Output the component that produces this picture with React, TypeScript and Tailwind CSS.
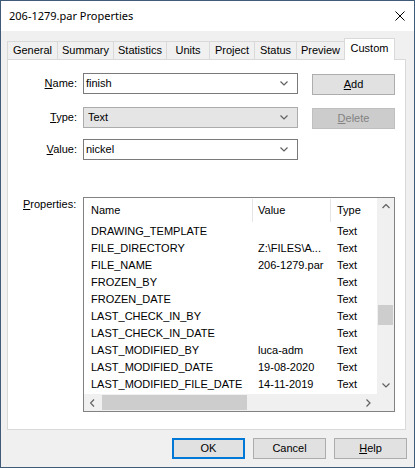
import React from "react";

const rows: [string, string, string][] = [
  ["DRAWING_TEMPLATE", "", "Text"],
  ["FILE_DIRECTORY", "Z:\\FILES\\A...", "Text"],
  ["FILE_NAME", "206-1279.par", "Text"],
  ["FROZEN_BY", "", "Text"],
  ["FROZEN_DATE", "", "Text"],
  ["LAST_CHECK_IN_BY", "", "Text"],
  ["LAST_CHECK_IN_DATE", "", "Text"],
  ["LAST_MODIFIED_BY", "luca-adm", "Text"],
  ["LAST_MODIFIED_DATE", "19-08-2020", "Text"],
  ["LAST_MODIFIED_FILE_DATE", "14-11-2019", "Text"],
];

const tabs: { label: string; w: string }[] = [
  { label: "General", w: "w-[50px]" },
  { label: "Summary", w: "w-[56px]" },
  { label: "Statistics", w: "w-[53px]" },
  { label: "Units", w: "w-[43px]" },
  { label: "Project", w: "w-[45px]" },
  { label: "Status", w: "w-[42px]" },
  { label: "Preview", w: "w-[48px]" },
];

function Chevron({ dir }: { dir: "down" | "up" | "left" | "right" }) {
  const pts =
    dir === "down"
      ? "0.5,0.5 4,4 7.5,0.5"
      : dir === "up"
      ? "0.5,4 4,0.5 7.5,4"
      : dir === "left"
      ? "4,0.5 0.5,4 4,7.5"
      : "0.5,0.5 4,4 0.5,7.5";
  const vb = dir === "down" || dir === "up" ? "0 0 8 5" : "0 0 5 8";
  const cls = dir === "down" || dir === "up" ? "w-[8px] h-[5px]" : "w-[5px] h-[8px]";
  return (
    <svg viewBox={vb} className={cls}>
      <polyline points={pts} fill="none" stroke="#606060" strokeWidth="1.2" />
    </svg>
  );
}

function Combo({ text, disabled }: { text: string; disabled?: boolean }) {
  return (
    <div
      className={
        disabled
          ? "ml-[6px] w-[215px] h-[21px] border border-[#acacac] bg-[#e5e5e5] flex items-center pl-[4px] pr-[9px]"
          : "ml-[6px] w-[215px] h-[21px] border border-[#7a7a7a] bg-white flex items-center pl-[2px] pr-[9px]"
      }
    >
      <span className="flex-1">{text}</span>
      <Chevron dir="down" />
    </div>
  );
}

export default function App() {
  return (
    <div className="w-[415px] h-[468px] border border-[#3f5b78] bg-[#f0f0f0] flex flex-col text-[11px] text-black font-['Liberation_Sans',Arial,sans-serif] leading-[13px] overflow-hidden">
      {/* Title bar */}
      <div className="h-[30px] bg-white flex items-center pl-[8px] pr-[9px] shrink-0">
        <span className="flex-1 text-[11px] leading-[14px] font-['Noto_Sans',sans-serif] -mt-[1px]">206-1279.par Properties</span>
        <svg viewBox="0 0 10 10" className="w-[10px] h-[10px]">
          <path d="M0.5 0.5 L9.5 9.5 M9.5 0.5 L0.5 9.5" stroke="#000" strokeWidth="1" fill="none" />
        </svg>
      </div>

      {/* Body */}
      <div className="flex flex-col pt-[7px] pl-[6px] pr-[8px]">
        {/* Tabs */}
        <div className="flex items-end h-[21px]">
          {tabs.map((t) => (
            <div
              key={t.label}
              className={`${t.w} h-[18px] border-l border-t border-[#d9d9d9] bg-[#f0f0f0] flex items-center justify-center`}
            >
              {t.label}
            </div>
          ))}
          <div className="w-[51px] h-[22px] -mb-[1px] border-l border-t border-r border-[#d9d9d9] bg-white flex items-start justify-center pt-[3px] relative z-10">
            Custom
          </div>
        </div>

        {/* Panel */}
        <div className="h-[371px] border border-[#d9d9d9] bg-white flex flex-col pt-[13px]">
          {/* Name */}
          <div className="flex items-start">
            <div className="w-[69px] h-[21px] flex items-center justify-end">
              <span>
                <span className="underline">N</span>ame:
              </span>
            </div>
            <Combo text="finish" />
            <div className="ml-[14px] mt-[1px] w-[83px] h-[21px] border border-[#adadad] bg-[#e1e1e1] flex items-center justify-center">
              <span>
                <span className="underline">A</span>dd
              </span>
            </div>
          </div>
          {/* Type */}
          <div className="flex items-start mt-[12px]">
            <div className="w-[69px] h-[21px] flex items-center justify-end">
              <span>
                <span className="underline">T</span>ype:
              </span>
            </div>
            <Combo text="Text" disabled />
            <div className="ml-[14px] mt-[1px] w-[83px] h-[21px] border border-[#bfbfbf] bg-[#cccccc] text-[#838383] flex items-center justify-center">
              <span>
                <span className="underline">D</span>elete
              </span>
            </div>
          </div>
          {/* Value */}
          <div className="flex items-start mt-[10px]">
            <div className="w-[69px] h-[21px] flex items-center justify-end">
              <span>
                <span className="underline">V</span>alue:
              </span>
            </div>
            <Combo text="nickel" />
          </div>

          {/* Properties */}
          <div className="flex items-start mt-[37px]">
            <div className="w-[75px] pl-[15px] mt-[1px]">
              <span className="underline">P</span>roperties:
            </div>
            <div className="w-[312px] h-[215px] border border-[#828282] bg-white flex flex-col">
              <div className="flex flex-1 min-h-0">
                <div className="flex-1 flex flex-col">
                  {/* header */}
                  <div className="h-[25px] flex">
                    <div className="w-[169px] my-[1px] border-r border-[#e5e5e5] flex items-center pl-[7px]">Name</div>
                    <div className="w-[78px] my-[1px] border-r border-[#e5e5e5] flex items-center pl-[5px]">Value</div>
                    <div className="flex-1 flex items-center pl-[6px]">Type</div>
                  </div>
                  {rows.map(([n, v, t]) => (
                    <div key={n} className="h-[17px] flex items-center whitespace-nowrap">
                      <div className="w-[169px] pl-[7px]">{n}</div>
                      <div className="w-[78px] pl-[5px]">{v}</div>
                      <div className="flex-1 pl-[6px]">{t}</div>
                    </div>
                  ))}
                </div>
                {/* vertical scrollbar */}
                <div className="w-[17px] bg-[#f0f0f0] flex flex-col">
                  <div className="h-[17px] flex items-center justify-center">
                    <Chevron dir="up" />
                  </div>
                  <div className="flex-1 flex flex-col">
                    <div className="mt-[90px] h-[20px] mx-[1px] bg-[#cdcdcd]" />
                  </div>
                  <div className="h-[17px] flex items-center justify-center">
                    <Chevron dir="down" />
                  </div>
                </div>
              </div>
              {/* horizontal scrollbar */}
              <div className="h-[17px] flex bg-[#f0f0f0]">
                <div className="w-[17px] flex items-center justify-center">
                  <Chevron dir="left" />
                </div>
                <div className="flex-1 flex items-center">
                  <div className="ml-[1px] w-[145px] h-[15px] bg-[#cdcdcd]" />
                </div>
                <div className="w-[17px] flex items-center justify-center">
                  <Chevron dir="right" />
                </div>
                <div className="w-[17px]" />
              </div>
            </div>
          </div>
        </div>

        {/* Buttons */}
        <div className="flex justify-end gap-[8px] mt-[8px] -mr-[1px]">
          <div className="w-[73px] h-[21px] border-2 border-[#0078d7] bg-[#e1e1e1] flex items-center justify-center">OK</div>
          <div className="w-[73px] h-[21px] border border-[#adadad] bg-[#e1e1e1] flex items-center justify-center">Cancel</div>
          <div className="w-[73px] h-[21px] border border-[#adadad] bg-[#e1e1e1] flex items-center justify-center">
            <span>
              <span className="underline">H</span>elp
            </span>
          </div>
        </div>
      </div>
    </div>
  );
}
